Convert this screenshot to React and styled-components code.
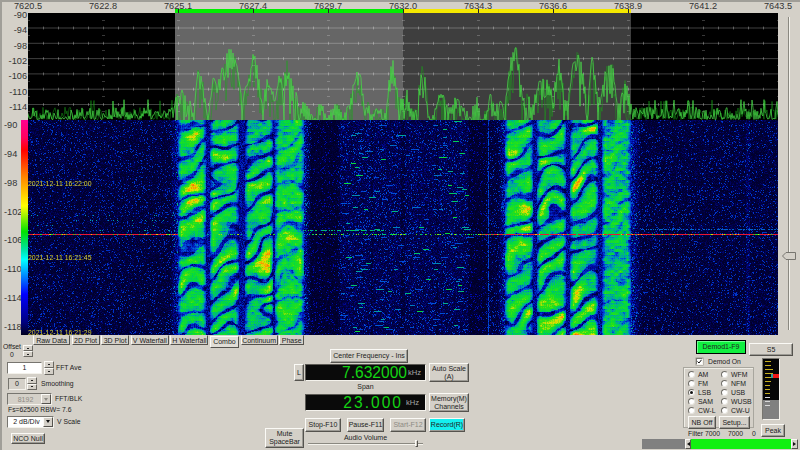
import React, { useEffect, useRef, useMemo } from 'react';
import styled, { createGlobalStyle } from 'styled-components';

const FACE = '#d4d0c8';

const GlobalStyle = createGlobalStyle`
  html, body { margin: 0; padding: 0; background: ${FACE}; }
  body { font-family: "Liberation Sans", Arial, sans-serif; color: #222; overflow: hidden; }
  * { box-sizing: border-box; }
`;

/* ---------- layout ---------- */

const Page = styled.div`
  width: 800px;
  height: 450px;
  overflow: hidden;
  background: ${FACE};
  border-top: 2px solid #a09e98;
  border-left: 2px solid #a09e98;
  display: flex;
  flex-direction: column;
`;

const FreqScale = styled.div`
  height: 11px;
  flex: none;
`;

const FreqLabels = styled.div`
  display: grid;
  grid-template-columns: repeat(11, 75px);
  margin-left: -11.5px;
  height: 7px;
  font-size: 9.2px;
  line-height: 9px;
  text-align: center;
  color: #333;
`;

const BandBars = styled.div`
  display: flex;
  height: 4px;
  margin-left: 173px;
`;

const BandBar = styled.div`
  width: ${p => p.$w}px;
  background: linear-gradient(90deg, ${p => p.$color} 74px, #222 74px) ${p => p.$offset}px 0 / 75px 100%;
`;

const Scope = styled.div`
  display: flex;
  height: 322px;
  flex: none;
`;

const Charts = styled.div`
  width: 776px;
  display: flex;
  flex-direction: column;
`;

const PlotRow = styled.div`
  display: flex;
  height: 107px;
`;

const PlotAxis = styled.div`
  width: 26px;
  height: 103px;
  margin-top: -3px;
  padding-right: 1px;
  display: flex;
  flex-direction: column;
  justify-content: space-between;
  text-align: right;
  font-size: 9.2px;
  line-height: 11px;
  color: #333;
`;

const Svg = styled.svg`
  display: block;
  flex: none;
`;

const WaterRow = styled.div`
  display: flex;
  height: 215px;
`;

const WaterAxis = styled.div`
  width: 19px;
  padding: 0 0 2px 2px;
  display: flex;
  flex-direction: column;
  justify-content: space-between;
  font-size: 9.2px;
  line-height: 11px;
  color: #333;
`;

const ColorBar = styled.div`
  width: 7px;
  background: linear-gradient(180deg, #ff0090 0, #ff0060 8%, #ff0000 14%, #ff8000 26%, #ffff00 40%, #00e000 52%, #00e0a0 60%, #00ffff 65%, #0080ff 73%, #0000ff 81%, #000080 94%, #000020 100%);
`;

const Waterfall = styled.div`
  position: relative;
  width: 750px;
  height: 215px;
  overflow: hidden;
  background: #000030;
`;

const WaterCanvas = styled.canvas`
  display: block;
  filter: blur(0.3px);
`;

const Stamp = styled.span`
  position: absolute;
  left: 0;
  top: ${p => p.$top}px;
  font-size: 6.9px;
  line-height: 8px;
  color: #d8d030;
  white-space: nowrap;
`;

const SliderCol = styled.div`
  position: relative;
  flex: 1;
  padding: 4px 0 5px 10px;
`;

const SliderTrack = styled.div`
  width: 2px;
  height: 100%;
  background: #8a8880;
  border-right: 1px solid #f4f2ec;
`;

const SliderThumb = styled.svg`
  position: absolute;
  left: 4px;
  top: 239px;
`;

const Bottom = styled.div`
  display: flex;
  height: 115px;
  flex: none;
`;

/* ---------- win32 bits ---------- */

const Btn = styled.div`
  width: ${p => p.$w}px;
  height: ${p => p.$h}px;
  flex: none;
  display: flex;
  align-items: center;
  justify-content: center;
  text-align: center;
  font-size: 7px;
  line-height: 8px;
  color: ${p => (p.$off ? '#8c8a84' : '#222')};
  background: ${p => p.$bg || FACE};
  border: 1px solid;
  border-color: #fbfaf6 #55534e #55534e #fbfaf6;
  box-shadow: inset -1px -1px 0 #9c9a94;
`;

const Tabs = styled.div`
  display: flex;
  margin-left: 31px;
  height: 12px;
  gap: 1.6px;
  align-items: flex-start;
`;

const Tab = styled.div`
  width: ${p => p.$w}px;
  height: ${p => (p.$on ? 12 : 10)}px;
  margin-top: ${p => (p.$on ? 1 : 0)}px;
  flex: none;
  text-align: center;
  font-size: 7px;
  line-height: 9px;
  color: #222;
  background: ${p => (p.$on ? '#e0ddd6' : FACE)};
  border: 1px solid;
  border-color: ${p => (p.$on ? '#fbfaf6' : FACE)} #55534e #55534e #fbfaf6;
`;

const Spin = styled.div`
  width: ${p => p.$w || 10}px;
  height: ${p => p.$h || 13}px;
  flex: none;
  display: flex;
  flex-direction: column;
`;

const SpinPart = styled.div`
  flex: 1;
  display: flex;
  align-items: center;
  justify-content: center;
  background: ${FACE};
  border: 1px solid;
  border-color: #fbfaf6 #6a6862 #6a6862 #fbfaf6;
  &::after {
    content: '';
    width: 2px;
    height: 1px;
    background: #222;
  }
`;

const Spinner = ({ w, h }) => (
  <Spin $w={w} $h={h}>
    <SpinPart />
    <SpinPart />
  </Spin>
);

const Field = styled.div`
  width: ${p => p.$w}px;
  height: ${p => p.$h}px;
  flex: none;
  display: flex;
  align-items: center;
  justify-content: ${p => p.$align || 'center'};
  padding: 0 2px;
  font-size: 7px;
  color: ${p => (p.$off ? '#8c8a84' : '#222')};
  background: ${p => p.$bg || '#fff'};
  border: 1px solid;
  border-color: #77756f #f4f2ec #f4f2ec #77756f;
`;

const Caption = styled.span`
  font-size: 6.8px;
  line-height: 8px;
  white-space: nowrap;
  margin-left: ${p => p.$ml || 0}px;
  color: ${p => p.$color || '#222'};
`;

/* ---------- left block ---------- */

const LeftBlock = styled.div`
  width: 302px;
  flex: none;
  display: flex;
  flex-direction: column;
`;

const LeftBody = styled.div`
  flex: 1;
  display: flex;
  justify-content: space-between;
  margin-top: -3px;
`;

const Controls = styled.div`
  display: flex;
  flex-direction: column;
  padding-left: 3px;
`;

const CtlRow = styled.div`
  display: flex;
  align-items: center;
  gap: ${p => p.$gap || 2}px;
  margin-top: ${p => p.$mt || 0}px;
  margin-left: ${p => p.$ml || 0}px;
  height: ${p => p.$h}px;
`;

const OffsetStack = styled.div`
  display: flex;
  flex-direction: column;
  align-items: center;
  width: 18px;
  margin-left: -2px;
`;

const SelectArrow = styled.div`
  width: 10px;
  height: 100%;
  margin-right: -2px;
  flex: none;
  display: flex;
  align-items: center;
  justify-content: center;
  background: ${FACE};
  border: 1px solid;
  border-color: #fbfaf6 #55534e #55534e #fbfaf6;
  &::after {
    content: '';
    border: 2px solid transparent;
    border-top: 3px solid ${p => (p.$off ? '#8c8a84' : '#111')};
    border-bottom: 0;
  }
`;

const SelectText = styled.span`
  flex: 1;
  text-align: center;
`;

const SideBtns = styled.div`
  display: flex;
  flex-direction: column;
  align-items: flex-end;
  justify-content: space-between;
  padding: 20px 0 2px;
`;

/* ---------- centre ---------- */

const Center = styled.div`
  width: 166px;
  flex: none;
  display: flex;
  flex-direction: column;
  padding: 14px 0 0 1px;
`;

const CenterFreqBtn = styled(Btn)`
  margin-left: 25px;
`;

const DisplayRow = styled.div`
  display: flex;
  align-items: center;
  gap: 3px;
  height: 19px;
`;

const Display = styled.div`
  width: 121px;
  height: 17px;
  display: flex;
  align-items: center;
  justify-content: flex-end;
  padding-right: 2px;
  background: #0a0a0a;
  border: 1px solid;
  border-color: #5c5a55 #f4f2ec #f4f2ec #5c5a55;
`;

const Digits = styled.span`
  font-size: 15.6px;
  line-height: 15px;
  color: #14d414;
  letter-spacing: ${p => p.$track || 0}px;
`;

const Unit = styled.span`
  width: ${p => p.$w}px;
  margin-left: ${p => p.$gap}px;
  font-size: 7.6px;
  color: #a8a8a8;
`;

const SpanLabel = styled.div`
  width: 121px;
  height: 11px;
  text-align: center;
  font-size: 7px;
  line-height: 10px;
`;

const CmdRow = styled.div`
  display: flex;
  margin-top: 6px;
`;

const CmdBtn = styled(Btn)`
  margin-right: ${p => p.$after || 0}px;
`;

const VolumeLabel = styled.div`
  width: 121px;
  margin-top: 2px;
  height: 8px;
  text-align: center;
  font-size: 7px;
  line-height: 8px;
`;

const Volume = styled.div`
  position: relative;
  width: 115px;
  height: 2px;
  margin: 1px 0 0 3px;
  background: #8a8880;
  border-bottom: 1px solid #f4f2ec;
`;

const VolumeThumb = styled.div`
  position: absolute;
  left: 107px;
  top: -3px;
  width: 3px;
  height: 7px;
  background: ${FACE};
  border: 1px solid;
  border-color: #fbfaf6 #55534e #55534e #fbfaf6;
`;

/* ---------- right block ---------- */

const Right = styled.div`
  width: 156px;
  margin-left: 172px;
  flex: none;
  display: flex;
  flex-direction: column;
  padding-top: 5px;
`;

const RightTop = styled.div`
  display: flex;
  align-items: flex-start;
  height: 16px;
  padding-left: 54px;
  gap: 3px;
`;

const DemodBtn = styled(Btn)`
  border-color: #000;
  box-shadow: inset 1px 1px 0 #70ff90;
`;

const S5Btn = styled(Btn)`
  margin-top: 3px;
`;

const RightBody = styled.div`
  display: flex;
  height: 82px;
  padding-left: 41px;
`;

const DemodCol = styled.div`
  width: 78px;
  flex: none;
  display: flex;
  flex-direction: column;
`;

const CheckRow = styled.div`
  display: flex;
  align-items: center;
  gap: 5px;
  height: 11px;
  padding-left: 13px;
`;

const CheckBox = styled.div`
  width: 7px;
  height: 7px;
  display: flex;
  background: #fff;
  border: 1px solid;
  border-color: #77756f #f4f2ec #f4f2ec #77756f;
  box-shadow: 0 0 0 0.5px #99978f;
`;

const GroupBox = styled.div`
  width: 71px;
  height: 61px;
  padding: 2px 3px 0 4px;
  border: 1px solid #a8a69e;
  box-shadow: inset 1px 1px 0 #efede6;
`;

const ModeGrid = styled.div`
  display: grid;
  grid-template-columns: 33px 1fr;
  grid-auto-rows: 9.1px;
`;

const Mode = styled.div`
  display: flex;
  align-items: center;
  gap: 3px;
  font-size: 6.9px;
  white-space: nowrap;
`;

const Radio = styled.div`
  position: relative;
  width: 7px;
  height: 7px;
  flex: none;
  border-radius: 50%;
  background: #fff;
  border: 1px solid;
  border-color: #6f6d67 #e8e6e0 #e8e6e0 #6f6d67;
  &::after {
    content: '';
    display: ${p => (p.$on ? 'block' : 'none')};
    position: absolute;
    left: 1px;
    top: 1px;
    width: 3px;
    height: 3px;
    border-radius: 50%;
    background: #111;
  }
`;

const GroupBtns = styled.div`
  display: flex;
  justify-content: space-between;
  margin-top: 1px;
`;

const FilterRow = styled.div`
  display: flex;
  margin: 2px 0 0 5px;
`;

const FilterCell = styled(Caption)`
  width: ${p => p.$w}px;
`;

const MeterCol = styled.div`
  display: flex;
  flex-direction: column;
  gap: 4px;
`;

const Meter = styled.div`
  position: relative;
  width: 18px;
  height: 62px;
  margin-top: 2px;
  margin-left: 1px;
  padding: 2px 0 0 2px;
  display: flex;
  flex-direction: column;
  gap: 3px;
  background: linear-gradient(#060606 0 68%, #808080 68% 100%);
  border: 1px solid;
  border-color: #77756f #f4f2ec #f4f2ec #77756f;
`;

const MeterTick = styled.div`
  width: ${p => p.$w}px;
  height: 1px;
  flex: none;
  background: ${p => p.$color};
`;

const MeterNeedle = styled.div`
  position: absolute;
  left: 10px;
  top: 15px;
  width: 6px;
  height: 4px;
  background: #f01818;
  box-shadow: -2px 0 0 #30a0a0;
`;

const Scrollbar = styled.div`
  display: flex;
  height: 10px;
  margin-top: 1px;
`;

const ScrollPart = styled.div`
  width: ${p => p.$w}px;
  background: ${p => p.$bg};
`;

const ScrollArrow = styled.div`
  width: ${p => p.$w}px;
  flex: none;
  display: flex;
  align-items: center;
  justify-content: center;
  background: ${FACE};
  border: 1px solid;
  border-color: #fbfaf6 #55534e #55534e #fbfaf6;
  &::after {
    content: '';
    border: 2px solid transparent;
    ${p => (p.$left ? 'border-right: 3px solid #111; border-left: 0;' : 'border-left: 3px solid #111; border-right: 0;')}
  }
`;

/* ---------- data drawing ---------- */

const mulberry = seed => () => {
  seed |= 0; seed = (seed + 0x6d2b79f5) | 0;
  let t = Math.imul(seed ^ (seed >>> 15), 1 | seed);
  t = (t + Math.imul(t ^ (t >>> 7), 61 | t)) ^ t;
  return ((t ^ (t >>> 14)) >>> 0) / 4294967296;
};

const ENVELOPE = [
  [175,100],[178,88],[184,90],[190,95],[193,112],[196,85],[198,65],[203,80],[206,100],[208,118],[211,90],[213,72],[217,88],[221,70],[226,52],[229,43],[233,52],[236,58],[239,75],[242,100],[245,88],[249,72],[253,50],[256,58],[260,78],[263,95],[266,80],[268,75],[272,85],[275,100],[279,75],[283,72],[287,60],[291,78],[296,90],[300,110],[304,98],[308,105],[314,116],[317,102],[323,105],[328,116],[333,105],[338,100],[343,112],[348,105],[351,92],[355,75],[358,63],[362,82],[365,112],[368,100],[372,110],[376,105],[382,105],[386,110],[389,75],[392,55],[395,70],[398,95],[402,95],
  [405,105],[407,85],[410,105],[417,105],[420,75],[423,60],[427,90],[430,118],[436,105],[440,88],[447,100],[452,105],[458,90],[463,105],[470,114],[477,95],[482,118],[486,108],[490,90],[495,104],[500,100],[504,105],[507,85],[512,50],[517,42],[520,75],[523,100],[527,88],[532,105],[536,85],[540,75],[548,80],[553,90],[559,58],[565,95],[568,100],[573,60],[577,48],[582,65],[587,100],[592,55],[597,85],[600,100],[607,60],[613,65],[618,105],[625,80],[628,88],[632,105],
];

function envelopeAt(x) {
  if (x < 175 || x > 632) return 104;
  for (let i = 1; i < ENVELOPE.length; i++) {
    const [x1, y1] = ENVELOPE[i];
    const [x0, y0] = ENVELOPE[i - 1];
    if (x <= x1) return y0 + ((x - x0) / (x1 - x0)) * (y1 - y0);
  }
  return 104;
}

function spectrumPoints(seed, spread) {
  const r = mulberry(seed);
  const out = [];
  for (let x = 28; x <= 778; x += 1) {
    const env = envelopeAt(x);
    const quiet = x < 175 || x > 632;
    let y;
    if (quiet) {
      const up = r();
      y = 119.5 - Math.pow(up, 1.7) * (up > 0.94 ? 20 : 14);
    } else {
      const a = r();
      y = env + a * spread * (x % 2 ? 0.4 : 1.2) + (r() < 0.16 ? r() * 40 : 0);
    }
    out.push(`${x - 28},${Math.min(y - 13, 107).toFixed(1)}`);
  }
  return out.join(' ');
}

const STOPS = [
  [0, 0, 0, 16], [0.1, 0, 0, 70], [0.2, 0, 10, 170], [0.3, 0, 80, 220], [0.38, 0, 160, 170],
  [0.48, 0, 215, 70], [0.62, 40, 225, 20], [0.76, 225, 225, 0], [0.88, 255, 130, 0], [1, 235, 20, 50],
];

function colorOf(v) {
  const t = Math.max(0, Math.min(1, v));
  for (let i = 1; i < STOPS.length; i++) {
    const a = STOPS[i - 1];
    const b = STOPS[i];
    if (t <= b[0]) {
      const k = (t - a[0]) / (b[0] - a[0]);
      return [a[1] + k * (b[1] - a[1]), a[2] + k * (b[2] - a[2]), a[3] + k * (b[3] - a[3])];
    }
  }
  return [235, 20, 50];
}

function makeNoise(seed) {
  const r = mulberry(seed);
  const table = new Float32Array(4096).map(() => r());
  const at = (i, j) => table[(i * 61 + j * 97 + 40960) & 4095];
  return (x, y) => {
    const i = Math.floor(x);
    const j = Math.floor(y);
    const fx = x - i;
    const fy = y - j;
    const sx = fx * fx * (3 - 2 * fx);
    const sy = fy * fy * (3 - 2 * fy);
    const top = at(i, j) * (1 - sx) + at(i + 1, j) * sx;
    const bot = at(i, j + 1) * (1 - sx) + at(i + 1, j + 1) * sx;
    return top * (1 - sy) + bot * sy;
  };
}

const BANDS = [
  [178, 205, 0.15], [210, 238, 0], [245, 272, 0], [275, 303, 0.5],
  [505, 532, 0.15], [537, 565, 0], [570, 597, 0], [602, 630, 0.6],
];
const SPARKS = [[340, 370], [373, 400], [405, 435], [438, 467]];

function paintWaterfall(ctx) {
  const W = 750;
  const H = 215;
  const img = ctx.createImageData(W, H);
  const r = mulberry(11);
  const warp = makeNoise(3);
  const heat = makeNoise(5);
  const mesh = makeNoise(9);
  const breakup = makeNoise(14);
  const dashes = new Float32Array(W * H);

  // short horizontal dashes of the weak signal in the middle
  SPARKS.forEach(([a, b]) => {
    for (let y = 1; y < H; y += 2) {
      if (r() > 0.34) continue;
      const sx = a + r() * (b - a) - 28;
      const len = 3 + r() * 5;
      const v = 0.31 + Math.pow(r(), 2) * 0.26;
      for (let i = 0; i < len; i++) dashes[y * W + Math.floor(sx + i)] = v * (0.85 + 0.15 * r());
    }
  });

  for (let y = 0; y < H; y++) {
    for (let x = 0; x < W; x++) {
      const X = x + 28;
      const Y = y + 120;
      const n = r();
      let v = 0.05 + 0.11 * n * n + (n > 0.92 ? 0.11 : 0);
      const band = BANDS.find(([a, b]) => X >= a && X <= b);

      if (band) {
        const edge = Math.min(X - band[0], band[1] - X);
        const fade = edge < 3 ? 0.6 + edge * 0.13 : 1;
        const phase = ((Y + 0.55 * (X - band[0])) * Math.PI * 2) / 23 + 7 * warp(X / 19, Y / 17) + band[0];
        const s = 0.5 + 0.5 * Math.sin(phase);
        const hot = heat(X / 16, Y / 26);
        const lines = mesh(X / 4, Math.floor(Y / 3) * 5.3);
        const cut = 0.22 * breakup(X / 9, Y / 9);
        v = s < cut ? 0.2 + s * 0.7 : 0.37 + s * (0.1 + 0.5 * hot * hot);
        v = v * (1 - band[2]) + (0.42 + 0.14 * lines) * band[2];
        v += (lines - 0.5) * 0.18 + (r() - 0.5) * 0.09;
        if (Y % 3 === 0) v -= 0.035;
        if (X % 2 === 0) v -= 0.02;
        v *= fade;
      } else {
        // skirts of the strong signal
        const gap1 = X > 170 && X < 178 ? (X - 170) / 8 : X > 303 && X < 310 ? (310 - X) / 7 : 0;
        const gap2 = X > 497 && X < 505 ? (X - 497) / 8 : X > 630 && X < 641 ? (641 - X) / 11 : 0;
        const inner = (X > 205 && X < 210) || (X > 238 && X < 245) || (X > 272 && X < 275) ||
          (X > 532 && X < 537) || (X > 565 && X < 570) || (X > 597 && X < 602);
        if (inner) v = 0.1 + 0.16 * r();
        v += (gap1 + gap2) * 0.24 * r();
      }

      if (X > 745 && X < 750 && !band) v += 0.08 * r();
      if ((X > 310 && X < 338) || (X > 468 && X < 486)) v *= 0.78;
      if (SPARKS.some(([a, b]) => X >= a && X <= b)) v += 0.05 * r();
      if (dashes[y * W + x]) v = Math.max(v, dashes[y * W + x]);
      if (X === 488 && !band && r() < 0.8) v = 0.24 + r() * 0.08;

      // faint carrier rows
      if (Y === 230 && X > 295 && X < 385 && r() < 0.6) v = 0.36 + r() * 0.18;
      if (Y > 210 && Y < 232 && X < 175 && Y % 5 === 0 && r() < 0.09) v = 0.38;
      if (Y === 229 && X > 640 && r() < 0.6) v = 0.32;
      if (Y === 234) {
        const strong = X < 178 || X > 478;
        if (strong) v = r() < 0.14 ? 0.56 : r() < 0.12 ? 0.78 : 1;
        else if (r() < 0.45) v = Math.max(v, 0.34 + r() * 0.4);
      }

      const [cr, cg, cb] = colorOf(v);
      const p = (y * W + x) * 4;
      img.data[p] = cr;
      img.data[p + 1] = cg;
      img.data[p + 2] = cb;
      img.data[p + 3] = 255;
    }
  }
  ctx.putImageData(img, 0, 0);
}

const RULES = [14.5, 29.8, 45.1, 60.4, 75.7, 91];

function SpectrumPlot() {
  const dark = useMemo(() => spectrumPoints(21, 34), []);
  const bright = useMemo(() => spectrumPoints(22, 20), []);
  const ticks = [];
  for (let x = 15; x < 750; x += 15) {
    RULES.forEach(y => ticks.push(<rect key={`${x}-${y}`} x={x} y={y - 1} width="1" height="3" fill="#fff" opacity="0.3" />));
  }
  const marks = [];
  for (let i = 0; i <= 10; i++) {
    [7, 22, 37, 52, 68, 83, 98].forEach(y => marks.push(<rect key={`${i}-${y}`} x={i * 75 - 1} y={y} width="3" height="1" fill="#fff" opacity="0.22" />));
  }
  return (
    <Svg width="750" height="107" viewBox="0 0 750 107">
      <rect width="750" height="107" fill="#000" />
      <rect x="147" width="228" height="107" fill="#666" />
      <rect x="375" width="228" height="107" fill="#3e3e3e" />
      {RULES.map(y => <rect key={y} y={y} width="750" height="1" fill="#fff" opacity="0.25" />)}
      {ticks}
      {marks}
      <polyline points={dark} fill="none" stroke="#18a818" strokeWidth="0.8" opacity="0.6" />
      <polyline points={bright} fill="none" stroke="#4ade4a" strokeWidth="0.9" opacity="0.8" />
    </Svg>
  );
}

function WaterfallView() {
  const ref = useRef(null);
  useEffect(() => {
    paintWaterfall(ref.current.getContext('2d'));
  }, []);
  return (
    <Waterfall>
      <WaterCanvas ref={ref} width="750" height="215" />
      <Stamp $top={60}>2021-12-11 16:22:00</Stamp>
      <Stamp $top={134}>2021-12-11 16:21:45</Stamp>
      <Stamp $top={209}>2021-12-11 16:21:29</Stamp>
    </Waterfall>
  );
}

const FREQS = ['7620.5', '7622.8', '7625.1', '7627.4', '7629.7', '7632.0', '7634.3', '7636.6', '7638.9', '7641.2', '7643.5'];
const PLOT_DB = [-90, -94, -98, -102, -106, -110, -114];
const WATER_DB = [-90, -94, -98, -102, -106, -110, -114, -118];
const TABS = [
  ['Raw Data', 37], ['2D Plot', 28], ['3D Plot', 28], ['V Waterfall', 38], ['H Waterfall', 38],
  ['Combo', 29], ['Continuum', 37], ['Phase', 25],
];
const MODES = [
  ['AM', 'WFM'], ['FM', 'NFM'], ['LSB', 'USB'], ['SAM', 'WUSB'], ['CW-L', 'CW-U'],
];
const METER = [
  [6, '#c8b020'], [6, '#c8b020'], [8, '#c8b020'], [8, '#c8b020'], [6, '#c8b020'], [6, '#c8b020'],
  [5, '#c8b020'], [5, '#c8b020'], [5, '#c8b020'], [5, '#d8d8d8'], [5, '#d8d8d8'], [5, '#d8d8d8'],
];

export default function App() {
  return (
    <Page>
      <GlobalStyle />
      <FreqScale>
        <FreqLabels>
          {FREQS.map(f => <span key={f}>{f}</span>)}
        </FreqLabels>
        <BandBars>
          <BandBar $w={228} $color="#00f000" $offset={4} />
          <BandBar $w={228} $color="#f4e800" $offset={1} />
        </BandBars>
      </FreqScale>

      <Scope>
        <Charts>
          <PlotRow>
            <PlotAxis>
              {PLOT_DB.map(d => <span key={d}>{d}</span>)}
            </PlotAxis>
            <SpectrumPlot />
          </PlotRow>
          <WaterRow>
            <WaterAxis>
              {WATER_DB.map(d => <span key={d}>{d}</span>)}
            </WaterAxis>
            <ColorBar />
            <WaterfallView />
          </WaterRow>
        </Charts>
        <SliderCol>
          <SliderTrack />
          <SliderThumb width="14" height="8" viewBox="0 0 14 8">
            <path d="M0.5 4 L4 0.5 H13.5 V7.5 H4 Z" fill={FACE} stroke="#77756f" />
          </SliderThumb>
        </SliderCol>
      </Scope>

      <Bottom>
        <LeftBlock>
          <Tabs>
            {TABS.map(([name, w]) => <Tab key={name} $w={w} $on={name === 'Combo'}>{name}</Tab>)}
          </Tabs>
          <LeftBody>
            <Controls>
              <CtlRow $h={14}>
                <OffsetStack>
                  <Caption>Offset</Caption>
                  <Caption>0</Caption>
                </OffsetStack>
                <Spinner w={10} h={12} />
              </CtlRow>
              <CtlRow $h={13} $mt={3} $gap={2} $ml={2}>
                <Field $w={35} $h={12}>1</Field>
                <Spinner w={10} h={14} />
                <Caption>FFT Ave</Caption>
              </CtlRow>
              <CtlRow $h={13} $mt={3} $gap={1} $ml={3}>
                <Field $w={18} $h={12} $bg={FACE}>0</Field>
                <Spinner w={10} h={13} />
                <Caption $ml={3}>Smoothing</Caption>
              </CtlRow>
              <CtlRow $h={12} $mt={3} $gap={3} $ml={2}>
                <Field $w={45} $h={12} $bg={FACE} $off $align="flex-start">
                  <SelectText>8192</SelectText>
                  <SelectArrow $off />
                </Field>
                <Caption>FFT/BLK</Caption>
              </CtlRow>
              <CtlRow $h={8} $mt={1} $ml={3}>
                <Caption>Fs=62500 RBW= 7.6</Caption>
              </CtlRow>
              <CtlRow $h={11} $mt={2} $gap={3} $ml={2}>
                <Field $w={47} $h={12} $align="flex-start">
                  <SelectText>2 dB/Div</SelectText>
                  <SelectArrow />
                </Field>
                <Caption>V Scale</Caption>
              </CtlRow>
              <CtlRow $h={11} $mt={6} $ml={6}>
                <Btn $w={34} $h={11}>NCO Null</Btn>
              </CtlRow>
            </Controls>
            <SideBtns>
              <Btn $w={10} $h={17}>L</Btn>
              <Btn $w={39} $h={20}>Mute<br />SpaceBar</Btn>
            </SideBtns>
          </LeftBody>
        </LeftBlock>

        <Center>
          <CenterFreqBtn $w={78} $h={14}>Center Frequency - Ins</CenterFreqBtn>
          <DisplayRow>
            <Display>
              <Digits>7.632000</Digits>
              <Unit $w={15} $gap={1}>kHz</Unit>
            </Display>
            <Btn $w={40} $h={19}>Auto Scale<br />(A)</Btn>
          </DisplayRow>
          <SpanLabel>Span</SpanLabel>
          <DisplayRow>
            <Display>
              <Digits $track={2}>23.000</Digits>
              <Unit $w={17} $gap={3}>kHz</Unit>
            </Display>
            <Btn $w={40} $h={19}>Memory(M)<br />Channels</Btn>
          </DisplayRow>
          <CmdRow>
            <CmdBtn $w={36} $h={14} $after={6}>Stop-F10</CmdBtn>
            <CmdBtn $w={37} $h={14} $after={6}>Pause-F11</CmdBtn>
            <CmdBtn $w={36} $h={14} $after={3} $off>Start-F12</CmdBtn>
            <CmdBtn $w={36} $h={14} $bg="#14f0f0">Record(R)</CmdBtn>
          </CmdRow>
          <VolumeLabel>Audio Volume</VolumeLabel>
          <Volume>
            <VolumeThumb />
          </Volume>
        </Center>

        <Right>
          <RightTop>
            <DemodBtn $w={50} $h={14} $bg="#10f040">Demod1-F9</DemodBtn>
            <S5Btn $w={44} $h={13}>S5</S5Btn>
          </RightTop>
          <RightBody>
            <DemodCol>
              <CheckRow>
                <CheckBox>
                  <svg width="5" height="5" viewBox="0 0 5 5">
                    <path d="M0.5 2.5 L2 4 L4.5 0.8" fill="none" stroke="#111" strokeWidth="1" />
                  </svg>
                </CheckBox>
                <Caption>Demod On</Caption>
              </CheckRow>
              <GroupBox>
                <ModeGrid>
                  {MODES.flat().map(m => (
                    <Mode key={m}>
                      <Radio $on={m === 'LSB'} />
                      {m}
                    </Mode>
                  ))}
                </ModeGrid>
                <GroupBtns>
                  <Btn $w={28} $h={13}>NB Off</Btn>
                  <Btn $w={31} $h={13}>Setup...</Btn>
                </GroupBtns>
              </GroupBox>
              <FilterRow>
                <FilterCell $w={17}>Filter</FilterCell>
                <FilterCell $w={23}>7000</FilterCell>
                <FilterCell $w={24}>7000</FilterCell>
                <FilterCell $w={5}>0</FilterCell>
              </FilterRow>
            </DemodCol>
            <MeterCol>
              <Meter>
                {METER.map(([w, color], i) => <MeterTick key={i} $w={w} $color={color} />)}
                <MeterNeedle />
              </Meter>
              <Btn $w={24} $h={13}>Peak</Btn>
            </MeterCol>
          </RightBody>
          <Scrollbar>
            <ScrollPart $w={43} $bg="#808080" />
            <ScrollArrow $w={6} $left />
            <ScrollPart $w={100} $bg="#10f010" />
            <ScrollArrow $w={7} />
          </Scrollbar>
        </Right>
      </Bottom>
    </Page>
  );
}
